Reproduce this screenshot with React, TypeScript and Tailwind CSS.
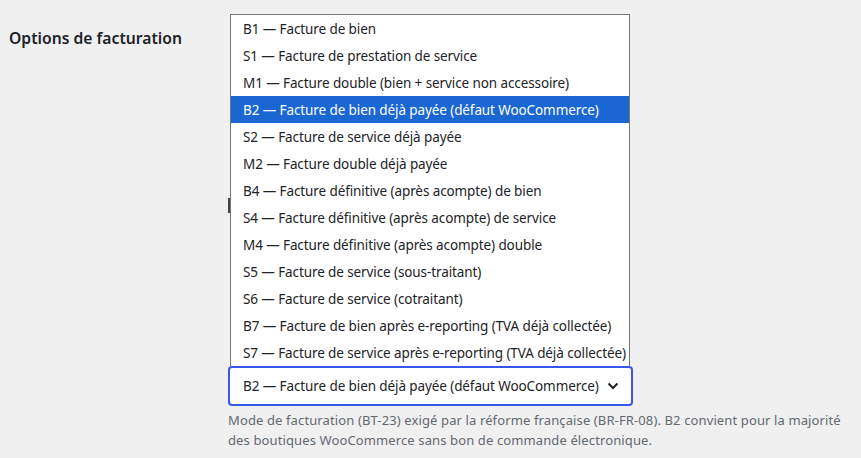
import React from "react";

const options = [
  "B1 — Facture de bien",
  "S1 — Facture de prestation de service",
  "M1 — Facture double (bien + service non accessoire)",
  "B2 — Facture de bien déjà payée (défaut WooCommerce)",
  "S2 — Facture de service déjà payée",
  "M2 — Facture double déjà payée",
  "B4 — Facture définitive (après acompte) de bien",
  "S4 — Facture définitive (après acompte) de service",
  "M4 — Facture définitive (après acompte) double",
  "S5 — Facture de service (sous-traitant)",
  "S6 — Facture de service (cotraitant)",
  "B7 — Facture de bien après e-reporting (TVA déjà collectée)",
  "S7 — Facture de service après e-reporting (TVA déjà collectée)",
];

const selected = 3;

export default function App() {
  return (
    <div
      className="min-h-[458px] w-full bg-[#f0f0f1] text-[#1d2327]"
      style={{ fontFamily: '"Noto Sans", "Open Sans", sans-serif' }}
    >
      <div className="flex">
        <div className="w-[228px] shrink-0 pl-[9px] pt-[26px]">
          <span className="text-[15.7px] font-semibold leading-[24px]">Options de facturation</span>
        </div>
        <div className="w-[420px]">
          <div className="relative h-[366px]">
            <div className="absolute left-0 top-[198px] h-[15px] w-[2px] bg-[#3c434a]" />
          </div>
          <div className="relative">
            <ul className="absolute bottom-full left-[2px] z-10 w-[400px] border border-b-0 border-[#767676] bg-white">
              {options.map((o, i) => (
                <li
                  key={o}
                  className={
                    "flex h-[27px] items-center whitespace-nowrap pl-[12px] pt-[2px] text-[13.5px] tracking-[-0.1px] " +
                    (i === selected ? "bg-[#1a66d2] text-white" : "text-[#1d2327]")
                  }
                >
                  {o}
                </li>
              ))}
            </ul>
            <div className="flex h-[40px] w-[405px] items-center justify-between rounded-[4px] border-2 border-[#3858e9] bg-white pl-[13px] pr-[12px] text-[13.5px] tracking-[-0.1px]">
              <span className="whitespace-nowrap">{options[selected]}</span>
              <svg width="12" height="8" viewBox="0 0 12 8" fill="none" className="shrink-0">
                <path d="M1.5 1.5 6 6l4.5-4.5" stroke="#1d2327" strokeWidth="2" />
              </svg>
            </div>
          </div>
          <p className="mt-[4px] w-[640px] whitespace-nowrap text-[13px] leading-[20px] tracking-[0.12px] text-[#646970]">
            Mode de facturation (BT-23) exigé par la réforme française (BR-FR-08). B2 convient pour la majorité
            <br />
            des boutiques WooCommerce sans bon de commande électronique.
          </p>
        </div>
      </div>
    </div>
  );
}
